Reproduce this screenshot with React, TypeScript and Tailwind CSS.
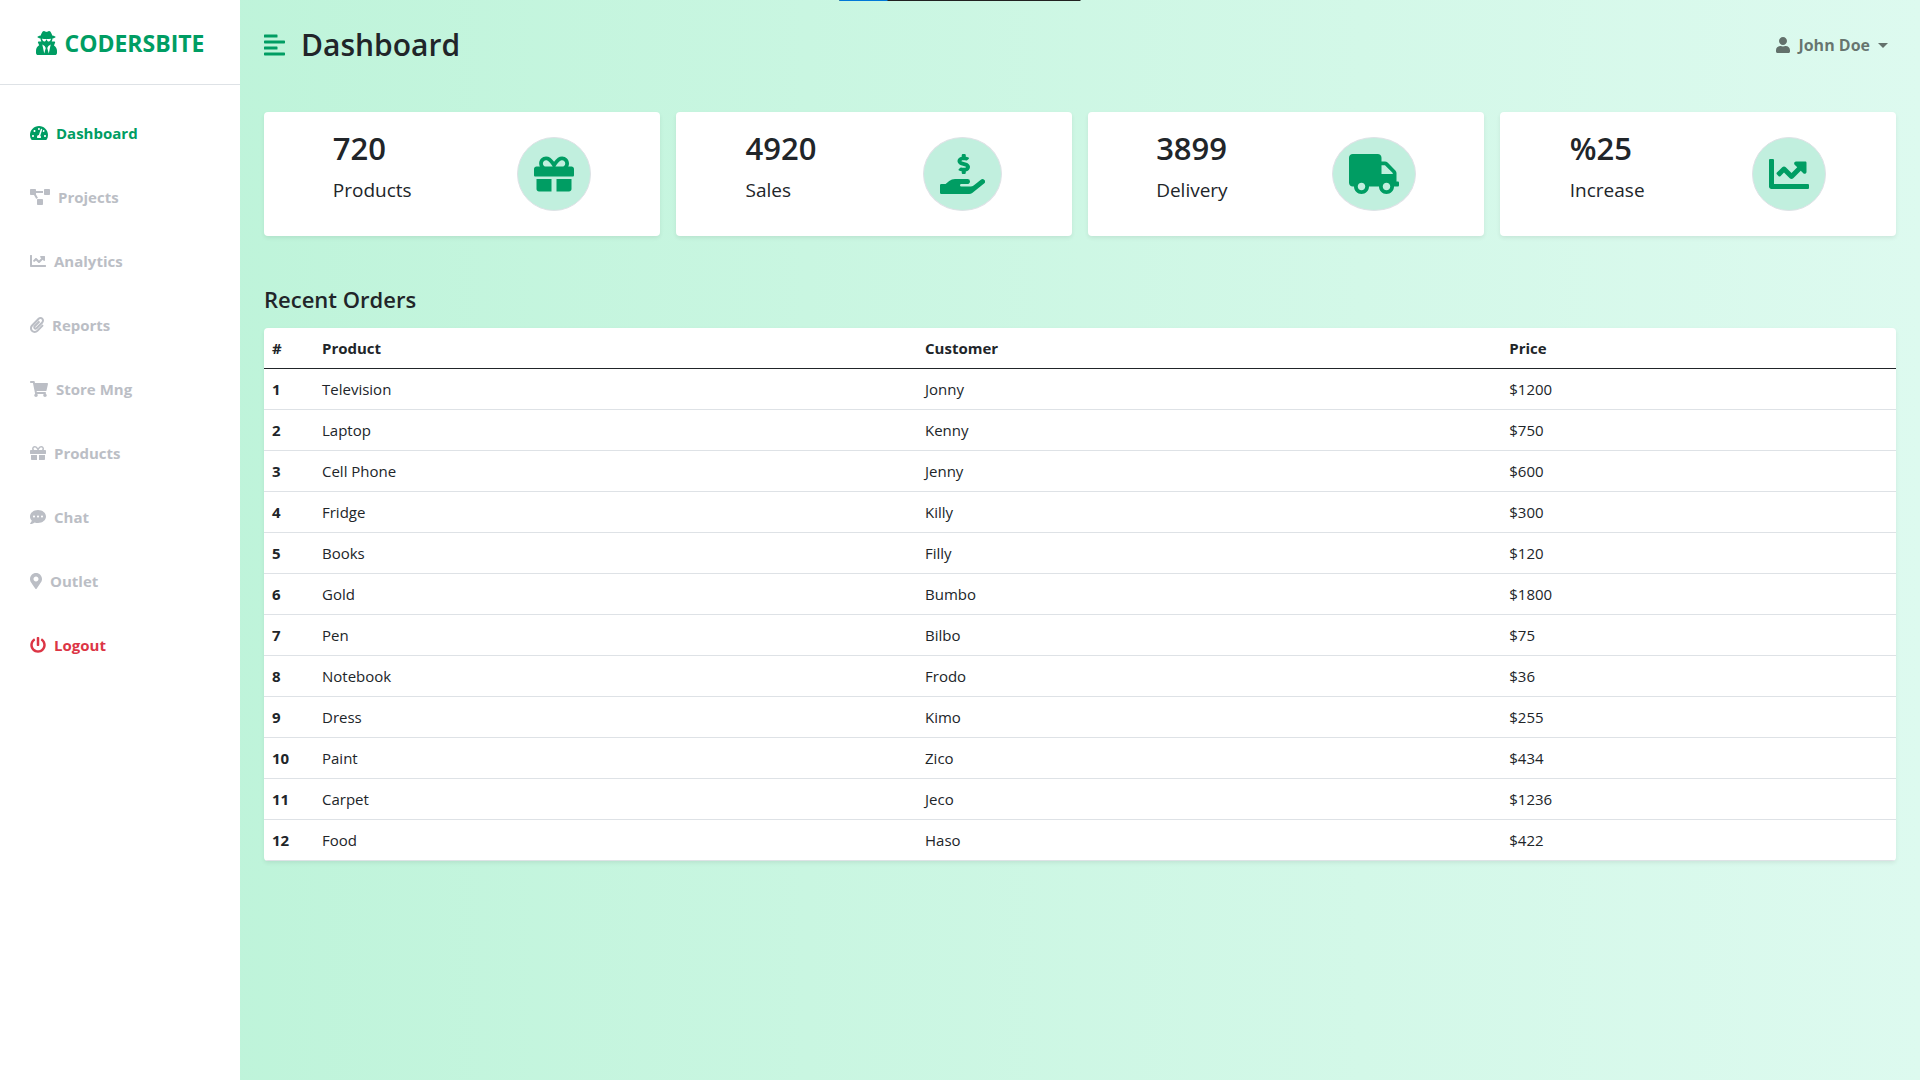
import type { IconType } from "react-icons";
import {
  FaAlignLeft,
  FaChartLine,
  FaCommentDots,
  FaGift,
  FaHandHoldingUsd,
  FaMapMarkerAlt,
  FaPaperclip,
  FaPowerOff,
  FaProjectDiagram,
  FaShoppingCart,
  FaTachometerAlt,
  FaTruck,
  FaUser,
  FaUserSecret,
} from "react-icons/fa";

type NavItem = { label: string; Icon: IconType; size: string; color: string };

const navItems: NavItem[] = [
  { label: "Dashboard", Icon: FaTachometerAlt, size: "w-[18px]", color: "text-[#009d63]" },
  { label: "Projects", Icon: FaProjectDiagram, size: "w-5", color: "text-[#bbbec5]" },
  { label: "Analytics", Icon: FaChartLine, size: "w-4", color: "text-[#bbbec5]" },
  { label: "Reports", Icon: FaPaperclip, size: "w-3.5", color: "text-[#bbbec5]" },
  { label: "Store Mng", Icon: FaShoppingCart, size: "w-[18px]", color: "text-[#bbbec5]" },
  { label: "Products", Icon: FaGift, size: "w-4", color: "text-[#bbbec5]" },
  { label: "Chat", Icon: FaCommentDots, size: "w-4", color: "text-[#bbbec5]" },
  { label: "Outlet", Icon: FaMapMarkerAlt, size: "w-3", color: "text-[#bbbec5]" },
  { label: "Logout", Icon: FaPowerOff, size: "w-4", color: "text-[#dc3545]" },
];

const stats: { value: string; label: string; Icon: IconType; size: string }[] = [
  { value: "720", label: "Products", Icon: FaGift, size: "w-10" },
  { value: "4920", label: "Sales", Icon: FaHandHoldingUsd, size: "w-[45px]" },
  { value: "3899", label: "Delivery", Icon: FaTruck, size: "w-[50px]" },
  { value: "%25", label: "Increase", Icon: FaChartLine, size: "w-10" },
];

const orders: [string, string, string][] = [
  ["Television", "Jonny", "$1200"],
  ["Laptop", "Kenny", "$750"],
  ["Cell Phone", "Jenny", "$600"],
  ["Fridge", "Killy", "$300"],
  ["Books", "Filly", "$120"],
  ["Gold", "Bumbo", "$1800"],
  ["Pen", "Bilbo", "$75"],
  ["Notebook", "Frodo", "$36"],
  ["Dress", "Kimo", "$255"],
  ["Paint", "Zico", "$434"],
  ["Carpet", "Jeco", "$1236"],
  ["Food", "Haso", "$422"],
];

function Sidebar() {
  return (
    <aside className="w-60 shrink-0 bg-white">
      <div className="flex items-center justify-center gap-2 border-b border-[#dee2e6] pt-[25px] pb-[23px] text-[23px] leading-9 font-bold text-[#009d63]">
        <FaUserSecret className="h-6 w-[21px]" />
        CODERSBITE
      </div>
      <nav className="my-4 flex flex-col">
        {navItems.map(({ label, Icon, size, color }) => (
          <a key={label} href="#" className={`flex items-center gap-2 px-[30px] py-5 text-[15px] leading-6 font-bold ${color}`}>
            <Icon className={`h-4 ${size}`} />
            {label}
          </a>
        ))}
      </nav>
    </aside>
  );
}

function TopBar() {
  return (
    <header className="flex items-center justify-between px-6 pt-[25px] pb-[47px]">
      <div className="flex items-center gap-4">
        <button type="button" aria-label="Toggle sidebar" className="text-[#009d63]">
          <FaAlignLeft className="h-6 w-[21px]" />
        </button>
        <h1 className="text-[30px] leading-10 font-semibold">Dashboard</h1>
      </div>
      <button type="button" className="flex items-center gap-2 px-2 text-base leading-6 font-bold text-black/55">
        <FaUser className="h-4 w-3.5" />
        John Doe
        <svg viewBox="0 0 10 5" className="h-[5px] w-2.5 fill-current" aria-hidden="true">
          <path d="M0 0h10L5 5z" />
        </svg>
      </button>
    </header>
  );
}

function Stats() {
  return (
    <section className="grid grid-cols-4 gap-4">
      {stats.map(({ value, label, Icon, size }) => (
        <div key={label} className="flex items-center justify-around rounded bg-white p-4 shadow-[0_2px_4px_rgba(0,0,0,0.075)]">
          <div className="pt-px pb-[15px]">
            <h3 className="mb-2 text-[31px] leading-[38px] font-semibold">{value}</h3>
            <p className="text-[19px] leading-[30px]">{label}</p>
          </div>
          <div className="rounded-[50%] border border-[#dee2e6] bg-[#c1efde] p-4 text-[#009d63]">
            <Icon className={`h-10 ${size}`} />
          </div>
        </div>
      ))}
    </section>
  );
}

function Orders() {
  return (
    <section className="mt-12">
      <h2 className="mb-3.5 text-[22px] leading-[30px] font-semibold">Recent Orders</h2>
      <table className="w-full table-fixed overflow-hidden rounded bg-white text-left text-[15px] leading-6 shadow-[0_2px_4px_rgba(0,0,0,0.075)]">
        <thead>
          <tr className="border-b border-[#212529]">
            <th scope="col" className="w-[50px] p-2">#</th>
            <th scope="col" className="w-[36.95%] p-2">Product</th>
            <th scope="col" className="w-[35.8%] p-2">Customer</th>
            <th scope="col" className="p-2">Price</th>
          </tr>
        </thead>
        <tbody>
          {orders.map(([product, customer, price], i) => (
            <tr key={product} className="border-b border-[#dee2e6]">
              <th scope="row" className="p-2">{i + 1}</th>
              <td className="p-2">{product}</td>
              <td className="p-2">{customer}</td>
              <td className="p-2">{price}</td>
            </tr>
          ))}
        </tbody>
      </table>
    </section>
  );
}

export default function App() {
  return (
    <div className="relative flex min-h-screen bg-linear-to-r from-[#baf3d7] to-[#ddfaef] font-['Open_Sans','Noto_Sans',sans-serif] text-[#212529]">
      <div className="absolute top-0 left-1/2 flex h-px w-[241px] -translate-x-1/2 bg-[#212121]">
        <div className="w-12 bg-[#0078d7]" />
      </div>
      <Sidebar />
      <main className="min-w-0 flex-1">
        <TopBar />
        <div className="px-6">
          <Stats />
          <Orders />
        </div>
      </main>
    </div>
  );
}
